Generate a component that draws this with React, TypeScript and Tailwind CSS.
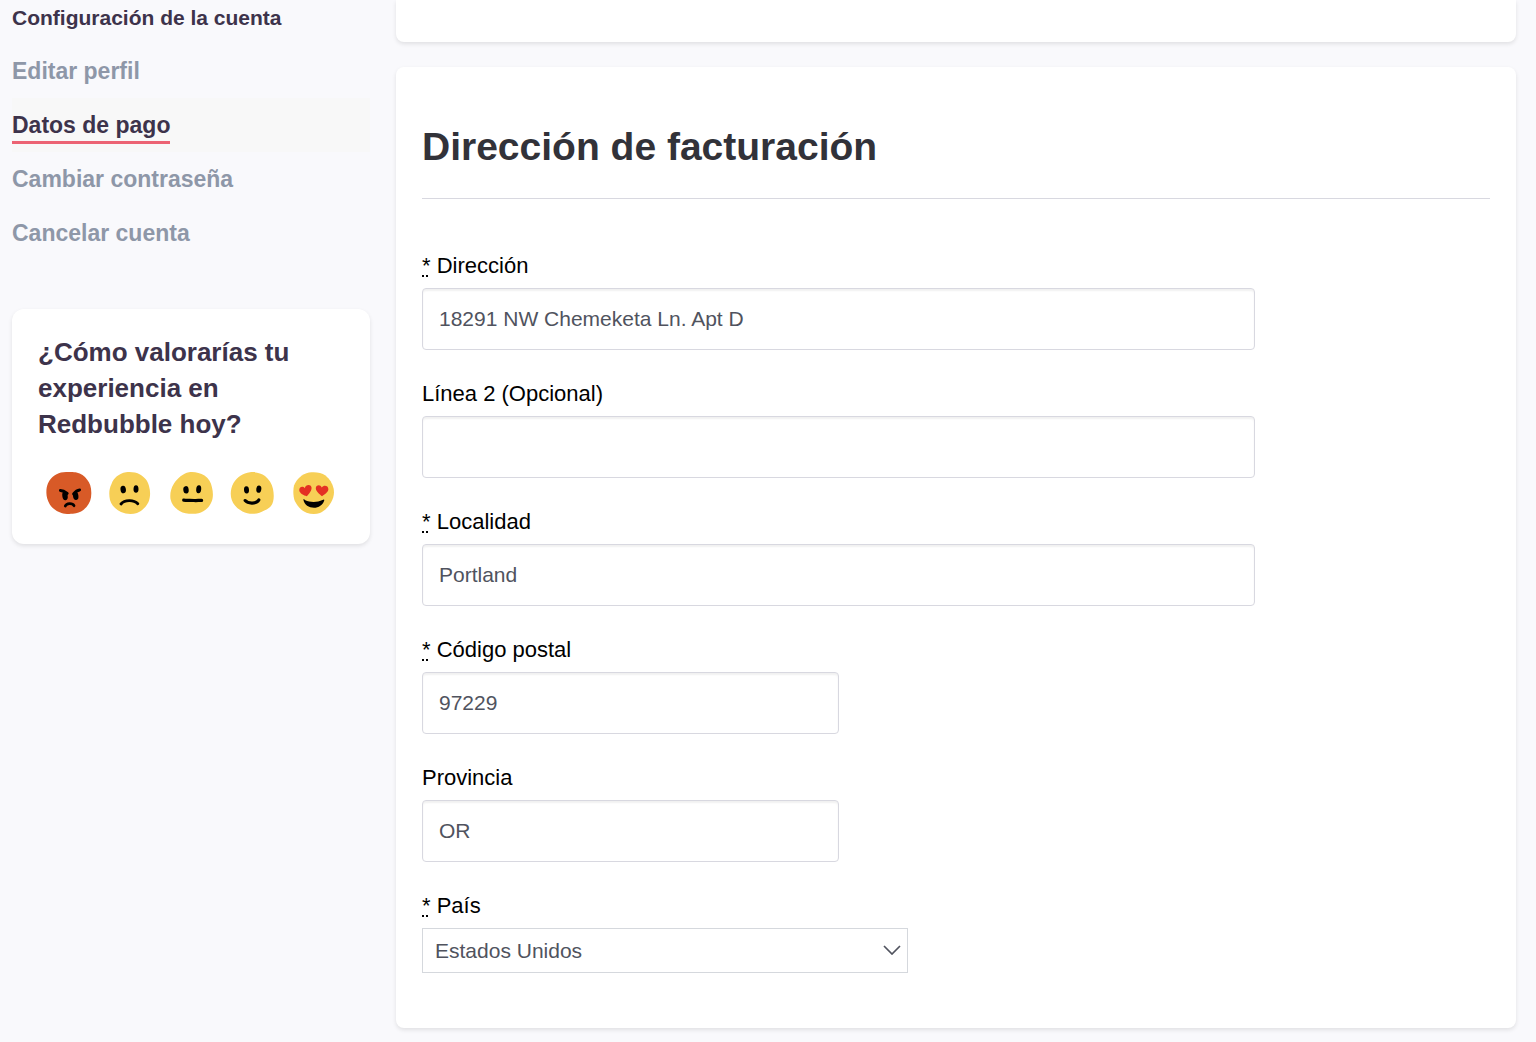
import React from 'react';

const accountLinks = [
    { label: 'Editar perfil', href: '#perfil', active: false },
    { label: 'Datos de pago', href: '#pago', active: true },
    { label: 'Cambiar contraseña', href: '#contrasena', active: false },
    { label: 'Cancelar cuenta', href: '#cancelar', active: false },
];

const addressFields = [
    { id: 'address1', label: 'Dirección', value: '18291 NW Chemeketa Ln. Apt D', required: true, wide: true },
    { id: 'address2', label: 'Línea 2 (Opcional)', value: '', required: false, wide: true },
    { id: 'city', label: 'Localidad', value: 'Portland', required: true, wide: true },
    { id: 'postcode', label: 'Código postal', value: '97229', required: true, wide: false },
    { id: 'state', label: 'Provincia', value: 'OR', required: false, wide: false },
];

const stroke = { fill: 'none', stroke: '#000', strokeLinecap: 'round', strokeLinejoin: 'round' } as const;

const faces = [
    {
        label: 'Muy mala',
        art: (
            <>
                <path fill="#d85a27" d="M16 0.4C20 -0.2 28 -0.2 31.5 0.5C36 1.4 39.5 4 42 7.5C45 11 46.3 15 46.3 20.5C46.5 26.5 44.8 31 41.5 35C38.5 38.3 35 40.6 31 41.3C27 42.2 20 42.2 16.5 41C11.5 39.3 7.5 36.6 4.7 32.2C2.6 28.8 1.2 24.5 1.4 20C1.4 14 3.5 8.5 7.5 5C10 2.6 13 1 16 0.4Z" />
                <path {...stroke} strokeWidth="2.9" d="M15.4 18.5C17.5 18.5 20 19.7 22.2 21.4M34.6 18C32.3 18.2 30.3 19.8 28.6 22" />
                <ellipse cx="20" cy="23.8" rx="2.7" ry="4.4" transform="rotate(-8 20 23.8)" />
                <ellipse cx="30.7" cy="23.8" rx="2.7" ry="4.2" transform="rotate(-8 30.7 23.8)" />
                <path {...stroke} strokeWidth="2.8" d="M20.3 34C21.5 31 27.5 30.8 29 33.7" />
            </>
        ),
    },
    {
        label: 'Mala',
        art: (
            <>
                <path fill="#f7cf56" d="M20 0.3C25 -0.3 30 0.4 34 2.5C38.5 5 42 9 43 14C44.5 19 44.6 25 42.5 30C40 35 36 39 31 41C26 42.5 20 42.2 15 40C10 37.5 5.5 33.5 4 28C2.8 22 3 17 5.5 12C7.5 6 13 1.5 20 0.3Z" />
                <ellipse cx="17.2" cy="17.5" rx="2.7" ry="3.8" transform="rotate(-8 17.2 17.5)" />
                <ellipse cx="30" cy="17" rx="2.5" ry="3.8" />
                <path {...stroke} strokeWidth="2.9" d="M15 32C18.5 27.7 27.8 27.5 31.8 31.8" />
            </>
        ),
    },
    {
        label: 'Normal',
        art: (
            <>
                <path fill="#f7cf56" d="M22 0.3C27 -0.4 33 0.8 37.5 3.5C41.5 6 44 10 45 15.5C46.3 20.5 46.4 26.5 44 31C41.5 36.5 36.5 40 31.5 41.3C26 42.4 17.5 42 13 39.2C8 36.3 4.5 32.5 3.5 27C2.8 22 3.8 16.5 7 11.5C10.5 6.5 16 1.3 22 0.3Z" />
                <ellipse cx="19" cy="17.8" rx="2.7" ry="3.7" transform="rotate(-8 19 17.8)" />
                <ellipse cx="31.7" cy="17.2" rx="2.5" ry="4" transform="rotate(6 31.7 17.2)" />
                <path {...stroke} strokeWidth="3.2" d="M16.7 28.2C20 28.6 23 28.2 27 28.5C30 28.7 32 28.3 34.6 28.4" />
            </>
        ),
    },
    {
        label: 'Buena',
        art: (
            <>
                <path fill="#f7cf56" d="M22 0.2C28 -0.3 33 1 37 4C41 7.5 44 11.5 45 17C46.2 23 46.2 30 43 34C40 37.5 35.5 38.8 31.5 40.7C26 42.6 19.5 42 14.5 39.5C9.5 36.8 5.5 33 3.8 28C1.9 23 2.6 16 5.5 11C9 5 15 1 22 0.2Z" />
                <ellipse cx="18.5" cy="17.9" rx="2.5" ry="3.6" transform="rotate(-4 18.5 17.9)" />
                <ellipse cx="30.8" cy="17.1" rx="2.5" ry="3.7" transform="rotate(8 30.8 17.1)" />
                <path {...stroke} strokeWidth="3.2" d="M17.2 28.6C20 32 28.5 32 30.8 28" />
            </>
        ),
    },
    {
        label: 'Muy buena',
        art: (
            <>
                <path fill="#f7cf56" d="M20 0.5C26 -0.4 32 0.3 36.5 3.5C40.5 7 43.5 11 44.6 16.5C45.6 22 44.5 26 42 30.5C39.5 35 35.5 39 31 41C26.5 42.5 22 42.2 17.5 40.8C12 38.5 8 33.5 5.8 29C4 24 4 18 5 13.5C7.5 7 13 2 20 0.5Z" />
                <path fill="#e42f23" d="M17.9 24.2C14.5 23.3 11 21.4 10.3 18.7C9.7 15 13.8 13.4 15.8 16.2C16.5 12.6 21.6 11.7 22.5 15.3C23 18.5 20 22 17.9 24.2Z" />
                <path fill="#e42f23" d="M33 24.3C30.5 22.3 27.2 19.8 26.8 16.6C26.7 12.8 31.6 12.2 32.7 15.6C34.8 12.7 39.3 13.6 39.4 17.2C39 20.4 35.7 22.3 33 24.3Z" />
                <path d="M14.3 27.3C14.8 26.8 15.6 27.6 16.3 28.2C21 30.5 28.5 30.5 33.5 28C34.5 27.2 35.4 27.2 35.3 28.2C34 33 29.5 35.8 25 35.8C20 35.8 15.2 33 14.3 27.3Z" />
            </>
        ),
    },
];

function FieldLabel({ id, label, required }: { id: string; label: string; required: boolean }) {
    return (
        <label htmlFor={id} className="mb-2 block text-[22px] leading-7 text-black">
            {required && (
                <>
                    <abbr title="Obligatorio" className="underline decoration-dotted decoration-2 underline-offset-2">*</abbr>{' '}
                </>
            )}
            {label}
        </label>
    );
}

function Sidebar() {
    return (
        <aside className="w-[358px] shrink-0">
            <nav aria-label="Cuenta">
                <h2 className="mb-3 pt-1 text-[21px] font-bold leading-7">Configuración de la cuenta</h2>
                <ul>
                    {accountLinks.map((link) => (
                        <li key={link.label} className={link.active ? 'flex h-[54px] items-center bg-[#f8f8f8]' : 'flex h-[54px] items-center'}>
                            <a
                                href={link.href}
                                className={
                                    link.active
                                        ? 'border-y-3 border-t-transparent border-b-[#ec6373] text-[23px] font-bold leading-8'
                                        : 'border-y-3 border-transparent text-[23px] font-bold leading-8 text-[#8e97a8]'
                                }
                            >
                                {link.label}
                            </a>
                        </li>
                    ))}
                </ul>
            </nav>

            {/* Satisfaction survey */}
            <section className="mt-[49px] rounded-xl bg-white px-[26px] pt-[25px] pb-[30px] shadow-[0_2px_4px_rgba(0,0,0,0.1)]">
                <h3 className="text-[26px] font-bold leading-9">¿Cómo valorarías tu experiencia en Redbubble hoy?</h3>
                <div className="mt-[30px] flex justify-around">
                    {faces.map((face) => (
                        <button key={face.label} type="button" aria-label={face.label} className="cursor-pointer">
                            <svg viewBox="0 0 48 42" className="block h-[42px] w-12">
                                {face.art}
                            </svg>
                        </button>
                    ))}
                </div>
            </section>
        </aside>
    );
}

function BillingAddress() {
    return (
        <section className="rounded-lg bg-white px-[26px] pt-14 pb-[55px] shadow-[0_2px_4px_rgba(0,0,0,0.1)]">
            <h1 className="border-b border-[#d8d8e0] pb-[27px] text-[39px] font-bold leading-[48px] text-[#323239]">Dirección de facturación</h1>
            <form className="flex flex-col gap-[30px] pt-[53px]">
                {addressFields.map((field) => (
                    <div key={field.id}>
                        <FieldLabel id={field.id} label={field.label} required={field.required} />
                        <input
                            id={field.id}
                            type="text"
                            defaultValue={field.value}
                            className={`block h-[62px] rounded border border-[#d8d8e0] bg-white px-4 text-[21px] text-[#50535e] shadow-[inset_0_2px_2px_rgba(0,0,0,0.06)] ${field.wide ? 'w-[78%]' : 'w-[39%]'}`}
                        />
                    </div>
                ))}
                <div>
                    <FieldLabel id="country" label="País" required />
                    <div className="relative w-[45.5%]">
                        <select id="country" defaultValue="us" className="block h-[45px] w-full appearance-none border border-[#d5d8dd] bg-white px-3 text-[21px] text-[#50535e]">
                            <option value="us">Estados Unidos</option>
                            <option value="es">España</option>
                            <option value="mx">México</option>
                        </select>
                        <svg viewBox="0 0 18 10" className="pointer-events-none absolute top-[17px] right-[7px] h-[10px] w-[18px]" fill="none" stroke="#50535e" strokeWidth="1.7">
                            <path d="M1 1l8 8 8-8" />
                        </svg>
                    </div>
                </div>
            </form>
        </section>
    );
}

export default function App() {
    return (
        <div className="flex min-h-screen gap-[26px] bg-[#f9f9fc] pr-5 pb-[14px] pl-3 font-['Liberation_Sans',Arial,sans-serif] text-[#3d334b]">
            <Sidebar />
            <main className="min-w-0 flex-1">
                <div className="mb-[25px] h-[42px] rounded-b-lg bg-white shadow-[0_2px_4px_rgba(0,0,0,0.1)]"></div>
                <BillingAddress />
            </main>
        </div>
    );
}
